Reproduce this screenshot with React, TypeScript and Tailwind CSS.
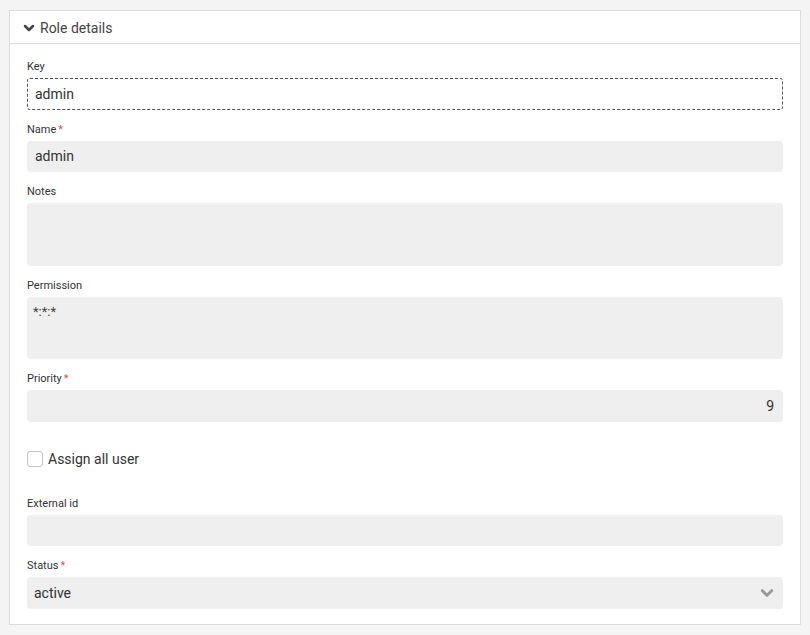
import React from 'react'

type FieldProps = {
    label: string
    required?: boolean
    children: React.ReactNode
}

const Field = ({ label, required, children }: FieldProps) => (
    <div className="flex flex-col">
        <label className="mb-[5px] h-[14px] pt-[1px] text-[11px] leading-[13px] text-[#333]">
            {label}
            {required && <span className="ml-[2px] text-[#d9534f]">*</span>}
        </label>
        {children}
    </div>
)

const Chevron = ({ className }: { className?: string }) => (
    <svg viewBox="0 0 24 24" fill="none" stroke="currentColor" strokeWidth="5" strokeLinecap="round" strokeLinejoin="round" className={className}>
        <polyline points="4 8 12 16 20 8" />
    </svg>
)

export default function App() {
    return (
        <div className="min-h-[635px] w-[810px] bg-[#f4f4f4] px-[9px] pt-[10px] font-['Roboto',sans-serif]">
            <div className="w-[792px] border border-[#dcdcdc] bg-white">
                {/* header */}
                <div className="flex h-[33px] items-center border-b border-[#dcdcdc] pl-[13px] pt-[1px]">
                    <Chevron className="h-[12px] w-[12px] text-[#444]" />
                    <span className="ml-[5px] pt-[2px] text-[14px] text-[#444]">Role details</span>
                </div>

                {/* form */}
                <div className="flex flex-col gap-[12px] px-[17px] pb-[15px] pt-[15px]">
                    <Field label="Key">
                        <div className="flex h-[31.5px] items-center rounded-[3px] border border-dashed border-[#555] bg-white px-[7px] pt-[1px] text-[14px] text-[#333]">
                            admin
                        </div>
                    </Field>
                    <Field label="Name" required>
                        <div className="flex h-[31.5px] items-center rounded-[4px] bg-[#efefef] px-[8px] pt-[1px] text-[14px] text-[#333]">
                            admin
                        </div>
                    </Field>
                    <Field label="Notes">
                        <div className="h-[62.5px] rounded-[4px] bg-[#efefef]" />
                    </Field>
                    <Field label="Permission">
                        <div className="h-[62.5px] rounded-[4px] bg-[#efefef] px-[6px] pt-[5px] text-[13px] text-[#444]">
                            *:*:*
                        </div>
                    </Field>
                    <Field label="Priority" required>
                        <div className="flex h-[31.5px] items-center justify-end rounded-[4px] bg-[#efefef] px-[9px] pt-[1px] text-[14px] text-[#333]">
                            9
                        </div>
                    </Field>
                    <div className="flex h-[50px] items-center">
                        <div className="h-[16px] w-[16px] rounded-[3px] border border-[#c4c4c4] bg-white" />
                        <span className="ml-[5px] pt-[1px] text-[14px] text-[#333]">Assign all user</span>
                    </div>
                    <Field label="External id">
                        <div className="h-[31.5px] rounded-[4px] bg-[#efefef]" />
                    </Field>
                    <Field label="Status" required>
                        <div className="flex h-[31.5px] items-center justify-between rounded-[4px] bg-[#efefef] pl-[7px] pr-[9px] text-[14px] text-[#333]">
                            <span className="pt-[1px]">active</span>
                            <Chevron className="h-[14px] w-[14px] text-[#999]" />
                        </div>
                    </Field>
                </div>
            </div>
        </div>
    )
}
